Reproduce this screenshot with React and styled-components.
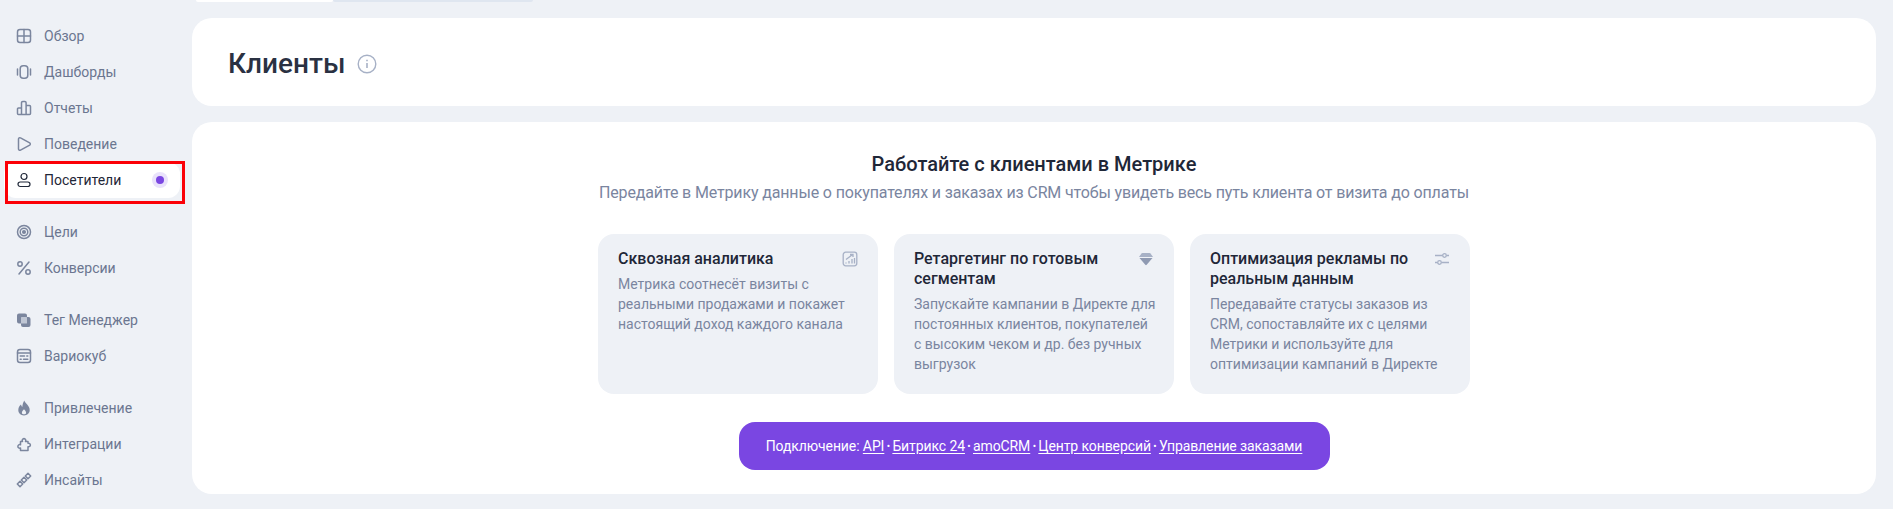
import React from 'react'
import styled, { createGlobalStyle } from 'styled-components'

const GlobalStyle = createGlobalStyle`
  *, *::before, *::after {
    box-sizing: border-box;
  }

  html, body {
    margin: 0;
    padding: 0;
    background: #eef1f6;
    font-family: Roboto, "Noto Sans", "Liberation Sans", sans-serif;
    overflow: hidden;
  }
`

const Page = styled.div`
  display: flex;
  width: 1893px;
  height: 509px;
  overflow: hidden;
`

const Sidebar = styled.nav`
  width: 192px;
  flex: none;
  padding-top: 18px;
  display: flex;
  flex-direction: column;
  gap: 16px;
`

const NavGroup = styled.div`
  display: flex;
  flex-direction: column;
`

const NavItem = styled.div`
  position: relative;
  height: 36px;
  margin: 0 12px 0 4px;
  padding-left: 12px;
  display: flex;
  align-items: center;
  gap: 12px;
  font-size: 14px;
  color: ${p => (p.$active ? '#1f2738' : '#6b7690')};
  background: ${p => (p.$active ? '#fff' : 'transparent')};
  border-radius: 12px;

  ${p => p.$active && `
    &::after {
      content: '';
      position: absolute;
      left: 1px;
      top: -1px;
      width: 180px;
      height: 43px;
      border: 3px solid #fb0007;
    }
  `}
`

const NavIconBox = styled.svg`
  width: 16px;
  height: 16px;
  flex: none;
  fill: none;
  stroke: ${p => (p.$active ? '#1f2738' : '#7b869e')};
  color: ${p => (p.$active ? '#1f2738' : '#7b869e')};
  stroke-width: ${p => (p.$active ? 1.2 : 1.5)};
  stroke-linecap: round;
  stroke-linejoin: round;
`

const NewDot = styled.span`
  position: absolute;
  left: 148px;
  top: 10px;
  width: 16px;
  height: 16px;
  border-radius: 50%;
  background: #e9e2fb;
  display: flex;
  align-items: center;
  justify-content: center;

  &::before {
    content: '';
    width: 8px;
    height: 8px;
    border-radius: 50%;
    background: #7a46e2;
  }
`

const Main = styled.main`
  flex: 1;
  margin-right: 17px;
  display: flex;
  flex-direction: column;
`

const TabStrip = styled.div`
  height: 2px;
  margin-bottom: 16px;
  padding-left: 4px;
  display: flex;
`

const Tab = styled.div`
  width: ${p => p.$width}px;
  background: ${p => (p.$active ? '#fff' : '#dfe6f0')};
  border-radius: 0 0 6px 6px;
`

const Panel = styled.section`
  background: #fff;
  border-radius: 20px;
`

const HeaderPanel = styled(Panel)`
  height: 88px;
  padding: 4px 0 0 36px;
  display: flex;
  align-items: center;
  gap: 12px;
  margin-bottom: 16px;
`

const PageTitle = styled.h1`
  margin: 0;
  font-size: 28px;
  line-height: 32px;
  font-weight: 500;
  color: #2a3142;
`

const InfoIcon = styled.svg`
  width: 20px;
  height: 20px;
  fill: none;
  stroke: #a7b1c6;
`

const ContentPanel = styled(Panel)`
  height: 372px;
  padding-top: 30px;
  display: flex;
  flex-direction: column;
  align-items: center;
`

const Heading = styled.h2`
  margin: 0;
  font-size: 20px;
  line-height: 24px;
  font-weight: 500;
  color: #1f2738;
`

const Subheading = styled.p`
  margin: 5px 0 0;
  font-size: 16px;
  line-height: 24px;
  letter-spacing: -0.145px;
  color: #7a859f;
`

const Cards = styled.div`
  margin-top: 29px;
  display: grid;
  grid-template-columns: repeat(3, 280px);
  gap: 16px;
`

const Card = styled.article`
  height: 160px;
  padding: 15px 20px;
  background: #eef1f6;
  border-radius: 16px;
`

const CardHead = styled.div`
  display: flex;
  justify-content: space-between;
  gap: 12px;
  margin-bottom: 5px;
`

const CardTitle = styled.h3`
  margin: 0;
  font-size: 16px;
  line-height: 20px;
  font-weight: 500;
  color: #1f2738;
`

const CardText = styled.p`
  margin: 0 -4px 0 0;
  font-size: 14px;
  line-height: 20px;
  color: #7a859f;
`

const CardIcon = styled.svg`
  width: 16px;
  height: 16px;
  flex: none;
  margin-top: 2px;
  fill: none;
  stroke: #a7b1c6;
  stroke-width: 1.3;
`

const ConnectBar = styled.div`
  margin-top: 28px;
  width: 591px;
  height: 48px;
  border-radius: 16px;
  background: #7a46e2;
  color: #fff;
  font-size: 14px;
  letter-spacing: -0.1px;
  display: flex;
  align-items: center;
  justify-content: center;
  white-space: pre;
`

const ConnectLink = styled.a`
  color: #fff;
  text-decoration: underline;
  text-underline-offset: 2px;
`

const Bullet = styled.span`
  font-size: 10px;
`

const icons = {
  overview: (
    <>
      <rect x="1.500" y="1.500" width="13" height="13" rx="2.500" />
      <path d="M8 1.500v13M1.500 8h13" />
    </>
  ),
  dashboards: (
    <>
      <rect x="4.200" y="1.700" width="7.600" height="12.600" rx="3" />
      <path d="M1.500 5v6M14.500 5v6" />
    </>
  ),
  reports: (
    <path d="M5.500 14.500H2.500a1 1 0 0 1-1-1V9a1 1 0 0 1 1-1h3M5.500 14.500V2.800a1.300 1.300 0 0 1 1.300-1.300h2a1.300 1.300 0 0 1 1.300 1.300V14.500zM10.100 5.500h3.400a1 1 0 0 1 1 1v7a1 1 0 0 1-1 1h-3.400" />
  ),
  behavior: <path d="M2.500 3a1.300 1.300 0 0 1 2-1.100l9.200 5a1.300 1.300 0 0 1 0 2.200l-9.200 5a1.300 1.300 0 0 1-2-1.100z" />,
  visitors: (
    <>
      <circle cx="8" cy="4.500" r="3" />
      <rect x="2" y="10" width="12" height="4.500" rx="2.200" />
    </>
  ),
  goals: (
    <>
      <circle cx="8" cy="8" r="6.500" />
      <circle cx="8" cy="8" r="3.800" />
      <circle cx="8" cy="8" r="1.300" fill="currentColor" />
    </>
  ),
  conversions: (
    <>
      <circle cx="4" cy="4" r="2.200" />
      <circle cx="12" cy="12" r="2.200" />
      <path d="M13 2 3 14" />
    </>
  ),
  tags: (
    <g stroke="none">
      <path
        fill="currentColor"
        d="M3 1.500h6a2 2 0 0 1 2 2V5h1.500a2 2 0 0 1 2 2v6a2 2 0 0 1-2 2H7a2 2 0 0 1-2-2v-1.500H3a2 2 0 0 1-2-2V3.500a2 2 0 0 1 2-2z"
      />
      <rect x="5" y="5" width="6" height="6.500" rx="0.500" fill="#bfc6d4" />
    </g>
  ),
  variocube: (
    <>
      <rect x="1.500" y="1.500" width="13" height="13" rx="2.500" />
      <path d="M1.500 5h13M4.200 8h4.300M10.800 8h1M4.200 11.200h1M7.500 11.200h4.300" />
    </>
  ),
  acquisition: (
    <path
      fill="currentColor"
      stroke="none"
      fillRule="evenodd"
      d="M8.300.6c.6 3 5.400 4.800 5.400 9.400 0 3.200-2.500 5.400-5.700 5.400S2.300 13.200 2.300 10c0-2.500 1.200-4.200 2.700-5.500.2 1.200.7 2 1.300 2.500.2-2.400.8-4.500 2-6.400zM8 9.300c-1.300 1.300-2.100 2.400-2.100 3.500 0 1 .9 1.500 2.100 1.500s2.100-.5 2.100-1.500c0-1.100-.8-2.200-2.100-3.500z"
    />
  ),
  integrations: (
    <path d="M4.500 5.500H6.500A1.800 1.800 0 1 1 9.500 5.500H12V7.300A1.800 1.800 0 1 1 12 10.700V14.500H4.500V12A1.800 1.800 0 1 1 4.500 8.800Z" />
  ),
  insights: (
    <>
      <path d="M12 1.300 14.700 4 12 6.700 9.300 4z" />
      <path d="M8 5.300 10.700 8 8 10.700 5.300 8z" />
      <path d="M4 9.300 6.700 12 4 14.700 1.300 12z" />
    </>
  ),
}

const navGroups = [
  [
    ['overview', 'Обзор'],
    ['dashboards', 'Дашборды'],
    ['reports', 'Отчеты'],
    ['behavior', 'Поведение'],
    ['visitors', 'Посетители', true],
  ],
  [
    ['goals', 'Цели'],
    ['conversions', 'Конверсии'],
  ],
  [
    ['tags', 'Тег Менеджер'],
    ['variocube', 'Вариокуб'],
  ],
  [
    ['acquisition', 'Привлечение'],
    ['integrations', 'Интеграции'],
    ['insights', 'Инсайты'],
  ],
]

const cards = [
  {
    title: 'Сквозная аналитика',
    text: 'Метрика соотнесёт визиты с реальными продажами и покажет настоящий доход каждого канала',
    icon: (
      <>
        <rect x="1.200" y="1.200" width="13.600" height="13.600" rx="2.500" />
        <path d="M4 12.500v-1M7 12.500V10M10 12.500V8M12.500 12.500V7M4 8.500l6-4.500M8 3.500h3V6" />
      </>
    ),
  },
  {
    title: 'Ретаргетинг по готовым сегментам',
    text: 'Запускайте кампании в Директе для постоянных клиентов, покупателей с\u00a0высоким чеком и др. без ручных выгрузок',
    icon: (
      <g stroke="none">
        <path fill="#a7b1c6" d="M4.300 2h7.400a1 1 0 0 1 .8.4L15 6H1l2.500-3.600a1 1 0 0 1 .8-.4z" />
        <path fill="#8f9ab2" d="M1.500 7h13L8.700 13.700a.9.9 0 0 1-1.400 0z" />
      </g>
    ),
  },
  {
    title: 'Оптимизация рекламы по реальным данным',
    text: 'Передавайте статусы заказов из CRM, сопоставляйте их с целями Метрики и используйте для оптимизации кампаний в Директе',
    icon: (
      <>
        <circle cx="10.500" cy="4.500" r="1.800" />
        <circle cx="5.500" cy="11.500" r="1.800" />
        <path d="M1 4.500h7.500M12.500 4.500H15M1 11.500h2.500M7.500 11.500H15" />
      </>
    ),
  },
]

const links = ['API', 'Битрикс 24', 'amoCRM', 'Центр конверсий', 'Управление заказами']

export default function App() {
  return (
    <Page>
      <GlobalStyle />
      <Sidebar>
        {navGroups.map((group, i) => (
          <NavGroup key={i}>
            {group.map(([icon, label, active]) => (
              <NavItem key={label} $active={active}>
                <NavIconBox viewBox="0 0 16 16" $active={active}>{icons[icon]}</NavIconBox>
                {label}
                {active && <NewDot />}
              </NavItem>
            ))}
          </NavGroup>
        ))}
      </Sidebar>
      <Main>
        <TabStrip>
          <Tab $active $width={137} />
          <Tab $width={200} />
        </TabStrip>
        <HeaderPanel>
          <PageTitle>Клиенты</PageTitle>
          <InfoIcon viewBox="0 0 20 20">
            <circle cx="10" cy="10" r="8.800" strokeWidth="1.400" />
            <path d="M10 9v5" strokeWidth="1.600" />
            <path d="M10 5.800v1.400" strokeWidth="1.600" />
          </InfoIcon>
        </HeaderPanel>
        <ContentPanel>
          <Heading>Работайте с клиентами в Метрике</Heading>
          <Subheading>
            Передайте в Метрику данные о покупателях и заказах из CRM чтобы увидеть весь путь клиента от визита до оплаты
          </Subheading>
          <Cards>
            {cards.map(card => (
              <Card key={card.title}>
                <CardHead>
                  <CardTitle>{card.title}</CardTitle>
                  <CardIcon viewBox="0 0 16 16">{card.icon}</CardIcon>
                </CardHead>
                <CardText>{card.text}</CardText>
              </Card>
            ))}
          </Cards>
          <ConnectBar>
            {'Подключение: '}
            {links.map((link, i) => (
              <React.Fragment key={link}>
                {i > 0 && <Bullet> • </Bullet>}
                <ConnectLink>{link}</ConnectLink>
              </React.Fragment>
            ))}
          </ConnectBar>
        </ContentPanel>
      </Main>
    </Page>
  )
}
